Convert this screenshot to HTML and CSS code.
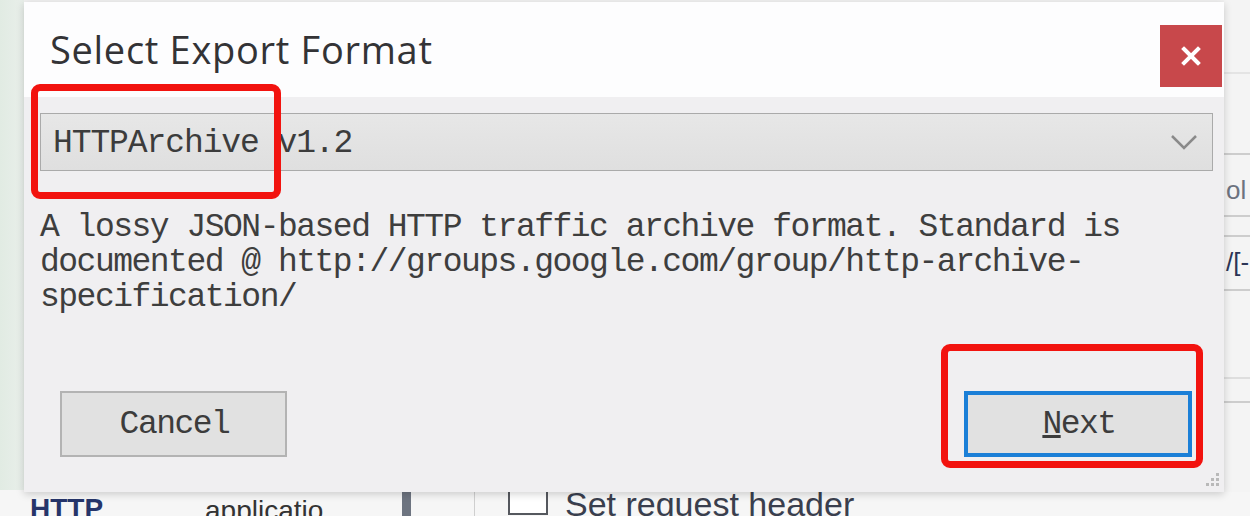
FILE: index.html
```html
<!DOCTYPE html>
<html>
<head>
  <title>Select Export Format</title>
  <link rel="stylesheet" href="styles.css">
</head>
<body>
  <div class="desktop">
    <!-- window behind the dialog -->
    <div class="backwin">
      <div class="back-row">
        <span class="back-http">HTTP</span>
        <span class="back-app">applicatio</span>
        <span class="back-bar"></span>
        <span class="back-sep"></span>
        <span class="back-check"></span>
        <span class="back-label">Set request header</span>
      </div>
    </div>
    <div class="side-strip">
      <div class="side-line l1"></div>
      <div class="side-line l2"></div>
      <div class="side-text t1">ol</div>
      <div class="side-line l3"></div>
      <div class="side-line l4"></div>
      <div class="side-text t2">/[-</div>
      <div class="side-line l5"></div>
      <div class="side-line l6"></div>
      <div class="side-line l7"></div>
    </div>

    <section class="dialog">
      <div class="dlg-head">
        <h1 class="dlg-title">Select Export Format</h1>
        <button class="dlg-close" title="Close">
          <svg width="20" height="20" viewBox="0 0 20 20">
            <path d="M3 3 L17 17 M17 3 L3 17" stroke="#fff" stroke-width="4" stroke-linecap="square"/>
          </svg>
        </button>
      </div>
      <div class="dlg-body">
        <div class="format-select">
          <span class="format-value">HTTPArchive v1.2</span>
          <svg class="chev" width="28" height="16" viewBox="0 0 28 16">
            <path d="M2 2 L14 14 L26 2" fill="none" stroke="#8a8a8a" stroke-width="2.5"/>
          </svg>
        </div>
        <p class="format-desc">A lossy JSON-based HTTP traffic archive format. Standard is<br>documented @ http://groups.google.com/group/http-archive-<br>specification/</p>
        <div class="dlg-foot">
          <button class="btn">Cancel</button>
          <button class="btn btn-default"><u>N</u>ext</button>
        </div>
      </div>
      <svg class="grip" width="18" height="18" viewBox="0 0 18 18">
        <rect x="13" y="2" width="3" height="3" fill="#b9b9b9"/>
        <rect x="8" y="7" width="3" height="3" fill="#b9b9b9"/>
        <rect x="13" y="7" width="3" height="3" fill="#b9b9b9"/>
        <rect x="3" y="12" width="3" height="3" fill="#b9b9b9"/>
        <rect x="8" y="12" width="3" height="3" fill="#b9b9b9"/>
        <rect x="13" y="12" width="3" height="3" fill="#b9b9b9"/>
      </svg>
    </section>

    <div class="mark mark-format"></div>
    <div class="mark mark-next"></div>
  </div>
</body>
</html>
```

FILE: styles.css
```css
* {
  margin: 0;
  padding: 0;
  box-sizing: border-box;
}

body {
  background: #f3f3f3;
  font-family: "Open Sans", Arial, sans-serif;
}

.desktop {
  position: relative;
  width: 1250px;
  height: 516px;
  overflow: hidden;
  background: linear-gradient(to right, #e1ebe3 0, #e9efea 24px, #f2f2f2 24px);
}

/* background window */
.backwin {
  position: absolute;
  left: 0;
  top: 0;
  width: 100%;
  height: 100%;
  padding-top: 490px;
}

.back-row {
  display: flex;
  align-items: flex-start;
  height: 26px;
  background: #f6f6f6;
  overflow: hidden;
}

.back-http {
  flex: none;
  width: 205px;
  padding-left: 30px;
  margin-top: 5px;
  font-family: "Liberation Sans", Arial, sans-serif;
  font-weight: 700;
  font-size: 28px;
  line-height: 28px;
  color: #26356a;
}

.back-app {
  flex: none;
  width: 197px;
  margin-top: 7px;
  font-family: "Liberation Sans", Arial, sans-serif;
  font-size: 28px;
  line-height: 28px;
  color: #333;
}

.back-bar {
  flex: none;
  width: 9px;
  height: 26px;
  background: #6d7480;
}

.back-sep {
  flex: none;
  margin-left: 63px;
  width: 1px;
  height: 26px;
  background: #cfcfcf;
}

.back-check {
  flex: none;
  margin-left: 33px;
  margin-top: -10px;
  width: 40px;
  height: 35px;
  border: 2px solid #55585e;
  background: #fff;
}

.back-label {
  flex: none;
  margin-left: 17px;
  margin-top: -3px;
  font-family: "Liberation Sans", Arial, sans-serif;
  font-size: 34px;
  line-height: 34px;
  color: #3a3f4e;
  white-space: nowrap;
}

.side-strip {
  position: absolute;
  left: 1224px;
  top: 0;
  width: 26px;
  height: 492px;
  background: #f4f4f4;
  display: flex;
  flex-direction: column;
}

.side-line {
  height: 2px;
  background: #cdcdcd;
}

.side-text {
  font-family: "Liberation Sans", Arial, sans-serif;
  font-size: 26px;
  line-height: 26px;
  color: #6d7380;
  padding-left: 2px;
  white-space: nowrap;
}

.t2 { color: #2c3556; }

.l1 { margin-top: 72px; background: #e4e4e4; }
.l2 { margin-top: 79px; }
.t1 { margin-top: 22px; }
.l3 { margin-top: 12px; }
.l4 { margin-top: 18px; }
.t2 { margin-top: 12px; }
.l5 { margin-top: 14px; }
.l6 { margin-top: 86px; background: #dedede; }
.l7 { margin-top: 22px; }

/* dialog */
.dialog {
  position: absolute;
  left: 24px;
  top: 2px;
  width: 1200px;
  height: 490px;
  background: #f0eff1;
  box-shadow: 0 2px 8px rgba(0, 0, 0, 0.18);
  display: flex;
  flex-direction: column;
}

.dlg-head {
  height: 95px;
  background: #fdfdfe;
  display: flex;
  justify-content: space-between;
  align-items: flex-start;
  padding: 23px 2px 0 26px;
}

.dlg-title {
  font-family: "Open Sans", Arial, sans-serif;
  font-weight: 400;
  font-size: 38px;
  line-height: 48px;
  letter-spacing: 0.7px;
  color: #333336;
}

.dlg-close {
  width: 62px;
  height: 62px;
  border: none;
  background: #c8484b;
  display: flex;
  align-items: center;
  justify-content: center;
}

.dlg-body {
  flex: 1;
  padding: 16px 11px 0 16px;
  display: flex;
  flex-direction: column;
  font-family: "Liberation Mono", "Courier New", monospace;
  font-size: 33px;
  letter-spacing: -1.5px;
  color: #3e3e3e;
}

.format-select {
  height: 58px;
  border: 1px solid #aaaaaa;
  background: linear-gradient(#e7e7e7, #dfdfdf);
  display: flex;
  align-items: center;
  justify-content: space-between;
  padding: 0 14px 0 12px;
}

.format-value {
  line-height: 40px;
  padding-top: 3px;
  letter-spacing: -1.1px;
  color: #3c3c3c;
}

.format-desc {
  margin-top: 39px;
  line-height: 35px;
  white-space: nowrap;
}

.dlg-foot {
  margin-top: 76px;
  display: flex;
  justify-content: space-between;
  padding: 0 21px 0 20px;
}

.btn {
  width: 227px;
  height: 66px;
  border: 2px solid #b3b3b3;
  background: #e1e1e1;
  font-family: "Liberation Mono", "Courier New", monospace;
  font-size: 33px;
  letter-spacing: -1.5px;
  color: #3c3c3c;
  padding-left: 2px;
}

.btn-default {
  width: 228px;
  border: 4px solid #1b7fd7;
}

.grip {
  position: absolute;
  right: 3px;
  bottom: 3px;
}

/* red annotation frames drawn over the screenshot */
.mark {
  position: absolute;
  border: 7px solid #f2130f;
  border-radius: 9px;
}

.mark-format {
  left: 31px;
  top: 84px;
  width: 250px;
  height: 115px;
}

.mark-next {
  left: 941px;
  top: 344px;
  width: 262px;
  height: 124px;
}
```
